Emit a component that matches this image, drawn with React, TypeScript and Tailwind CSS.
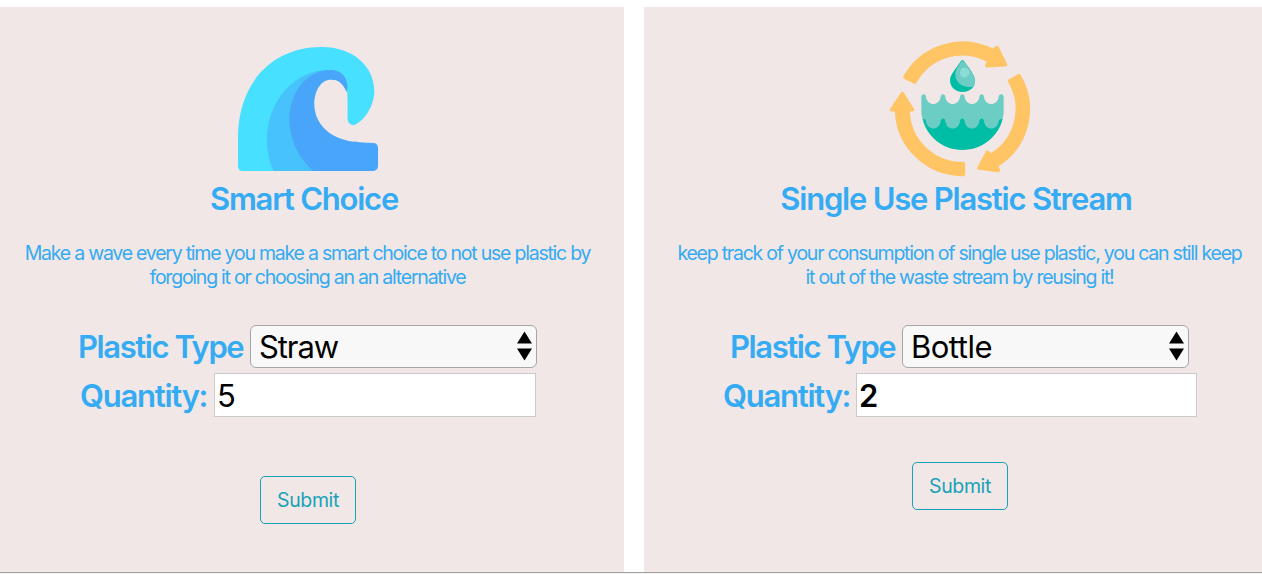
import type { ReactNode } from "react";

function WaveIcon() {
  return (
    <svg viewBox="54 27 420 420" className="block size-[140px]">
      <path
        d="M54 408V318C56 160 155 51 305 51C398 51 463 108 463 184C463 226 434 272 405 284C392 288 382 279 382 265V190C370 120 330 130 300 160L250 423H68C60 423 54 417 54 408Z"
        fill="#48e0ff"
      />
      <path d="M161 423C145 390 139 350 141 318C146 210 225 120 325 120L345 160L300 423Z" fill="#48c2fa" />
      <path
        d="M280 423C235 385 208 326 208 270C208 185 262 120 333 120C362 120 383 141 382 172L380 187C370 162 355 149 333 149C304 149 283 180 283 222C283 285 337 339 462 339C469 340 474 346 474 353V409C474 417 468 423 460 423Z"
        fill="#48a5fa"
      />
      <path
        d="M380 189C370 162 355 149 333 149C304 149 283 180 283 222C283 278 325 325 400 335L430 300L396 286C386 283 382 275 382 265V210Z"
        fill="#f0e7e6"
      />
    </svg>
  );
}

function WaterCycleIcon() {
  return (
    <svg viewBox="60 27 420 420" className="block size-[140px]">
      <g fill="#ffc464" stroke="#ffc464" strokeWidth="11" strokeLinejoin="round">
        <path d="M105 141A198 198 0 0 1 368 62L381 53L406 104L351 107L357 92A162 162 0 0 0 135 156Z" />
        <path d="M447 137A197 197 0 0 1 378 407L385 421L327 414L352 367L362 376A162 162 0 0 0 419 153Z" />
        <path d="M280 433A197 197 0 0 1 80 239H65L97 191L127 239H114A163 163 0 0 0 280 401Z" />
      </g>
      <path
        d="M154 201C154 190 168 190 168 201C172 229 208 229 212 201C212 190 226 190 226 201C230 229 266 229 270 201C270 190 284 190 284 201C288 229 324 229 328 201C328 190 342 190 342 201C346 229 382 229 386 201C386 190 401 190 401 201V240C401 310 345 352 277 352C210 352 154 310 154 240Z"
        fill="#6ccdc5"
      />
      <path
        d="M159 268C161 265 168 267 168 274C172 303 208 303 212 274C212 263 226 263 226 274C230 303 266 303 270 274C270 263 284 263 284 274C288 303 324 303 328 274C328 263 342 263 342 274C346 303 382 303 386 274C387 267 394 265 397 268C384 322 335 360 277 360C220 360 172 323 159 268Z"
        fill="#00bda5"
      />
      <path d="M273 93C275 89 280 89 282 93C299 117 315 135 315 153C315 173 298 186 277 186C257 186 240 172 240 151C240 134 258 116 273 93Z" fill="#00bda5" />
      <path d="M278 90C298 116 315 135 315 153C315 160 312 167 308 170C281 176 256 160 256 133C256 121 265 107 278 90Z" fill="#6ccdc5" />
      <circle cx="284" cy="128" r="14.5" fill="#8bdcd7" />
    </svg>
  );
}

function PlasticSelect({ value, valueClass }: { value: string; valueClass: string }) {
  return (
    <button className="flex h-[43px] w-[287px] items-center justify-between rounded-[6px] border border-[#a6a6a6] bg-[#f8f8f8] pr-1 pl-2 text-[31px] leading-none text-black">
      <span className={valueClass}>{value}</span>
      <svg viewBox="0 0 15 30" className="mb-px h-[30px] w-[15px]">
        <path d="M7.5 0.5L15 12.5H0ZM0 17.5H15L7.5 29.5Z" />
      </svg>
    </button>
  );
}

type CardProps = {
  icon: ReactNode;
  title: string;
  lines: [string, string];
  select: ReactNode;
  quantity: ReactNode;
  submitClass: string;
};

function Card({ icon, title, lines, select, quantity, submitClass }: CardProps) {
  return (
    <div className="flex w-[632px] shrink-0 flex-col items-center bg-[#f0e7e6] pt-8 text-[#34abf3]">
      {icon}
      <h2 className="mt-px pr-[8px] text-[31px] leading-[38px] font-[580] tracking-[-1.22px]">{title}</h2>
      <p className="mt-[23px] pr-px text-center text-[19.5px] leading-6 font-normal tracking-[-1.23px] whitespace-nowrap">
        {lines[0]}
        <br />
        {lines[1]}
      </p>
      <div className="mt-[36px] flex items-center">
        <label className="-ml-px w-[172px] text-[31px] leading-[43px] font-[580] tracking-[-1.42px]">Plastic Type</label>
        {select}
      </div>
      <div className="mt-[5px] flex items-center">
        <label className="w-[134px] pt-px text-[31px] leading-[43px] font-[580] tracking-[-1.25px]">Quantity:</label>
        {quantity}
      </div>
      <button className={`h-12 w-24 rounded-[5px] border border-[#17a2b8] pt-0.5 text-[19.5px] leading-none tracking-[-0.4px] text-[#17a2b8] ${submitClass}`}>
        Submit
      </button>
    </div>
  );
}

export default function App() {
  return (
    <div className="h-[574px] w-full overflow-hidden bg-white pt-[7px] font-['Inter','Liberation_Sans',sans-serif]">
      <div className="-ml-2 flex h-[565px] gap-5">
        <Card
          icon={<WaveIcon />}
          title="Smart Choice"
          lines={["Make a wave every time you make a smart choice to not use plastic by", "forgoing it or choosing an an alternative"]}
          select={<PlasticSelect value="Straw" valueClass="tracking-[-1.1px]" />}
          quantity={
            <input defaultValue="5" className="h-[44px] w-[322px] border border-[#cacaca] bg-white px-[2px] pt-0.5 text-[31px] text-black" />
          }
          submitClass="mt-[59px]"
        />
        <Card
          icon={<WaterCycleIcon />}
          title="Single Use Plastic Stream"
          lines={["keep track of your consumption of single use plastic, you can still keep", "it out of the waste stream by reusing it!"]}
          select={<PlasticSelect value="Bottle" valueClass="tracking-[-0.5px]" />}
          quantity={
            <input defaultValue="2" className="-ml-px h-[44px] w-[341px] border border-[#cacaca] bg-white px-[2px] pt-0.5 text-[31px] font-[580] text-black" />
          }
          submitClass="mt-[45px]"
        />
      </div>
      <div className="h-px bg-[#a0a0a0]" />
      <div className="h-px bg-[#f2f2f2]" />
    </div>
  );
}
